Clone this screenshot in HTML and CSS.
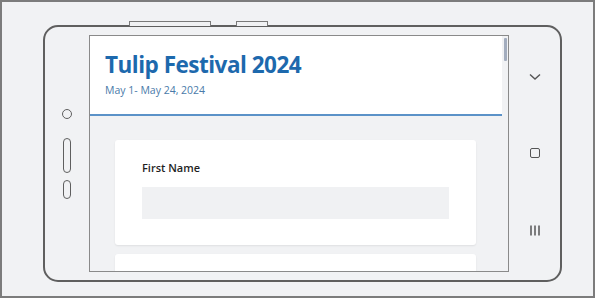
FILE: index.html
```html
<!DOCTYPE html>
<html lang="en">
<head>
    <meta charset="UTF-8">
    <meta name="viewport" content="width=device-width, initial-scale=1.0">
    <title>Tulip Festival 2024</title>
    <link rel="stylesheet" href="styles.css">
</head>
<body>

    <div class="frame">
        <div class="top-buttons">
            <div class="hw-button volume"></div>
            <div class="hw-button power"></div>
        </div>
        <div class="phone">
            <div class="side-left">
                <div class="camera"></div>
                <div class="pill long"></div>
                <div class="pill short"></div>
            </div>
            <div class="screen">
                <div class="content">
                    <div class="header">
                        <h1>Tulip Festival 2024</h1>
                        <p class="dates">May 1- May 24, 2024</p>
                    </div>
                    <div class="form">
                        <div class="card">
                            <label for="firstName">First Name</label>
                            <div class="field" id="firstName"></div>
                        </div>
                        <div class="card"></div>
                    </div>
                </div>
                <div class="scrollbar">
                    <div class="thumb"></div>
                </div>
            </div>
            <div class="side-right">
                <svg width="12" height="8" viewBox="0 0 12 8">
                    <path d="M1 1.5 L6 6 L11 1.5" fill="none" stroke="#555" stroke-width="1.4"/>
                </svg>
                <div class="square"></div>
                <svg width="12" height="11" viewBox="0 0 12 11">
                    <path d="M2 0.5 V10.5 M6 0.5 V10.5 M10 0.5 V10.5" fill="none" stroke="#555" stroke-width="1.5"/>
                </svg>
            </div>
        </div>
    </div>

</body>
</html>
```

FILE: styles.css
```css
body {
    margin: 0;
    background: #ffffff;
    font-family: "Open Sans", Arial, sans-serif;
}
.frame {
    box-sizing: border-box;
    width: 595px;
    height: 298px;
    border: 2px solid #7c7c7c;
    background: #f1f2f4;
    padding: 19px 0 0 41px;
}
.top-buttons {
    display: flex;
    margin-left: 86px;
    height: 4px;
}
.hw-button {
    box-sizing: border-box;
    height: 5px;
    border: 1px solid #7a7a7a;
    border-bottom: none;
    background: #f1f2f4;
}
.volume {
    width: 82px;
}
.power {
    width: 32px;
    margin-left: 25px;
}
.phone {
    box-sizing: border-box;
    width: 519px;
    height: 257px;
    border: 2px solid #5f5f5f;
    border-radius: 15px;
    display: flex;
    align-items: center;
}
.side-left {
    width: 44px;
    display: flex;
    flex-direction: column;
    align-items: center;
}
.camera {
    box-sizing: border-box;
    width: 10px;
    height: 10px;
    border: 1.5px solid #5f5f5f;
    border-radius: 50%;
}
.pill {
    box-sizing: border-box;
    width: 8px;
    border: 1.5px solid #5f5f5f;
    border-radius: 4px;
}
.long {
    height: 35px;
    margin-top: 19px;
}
.short {
    height: 19px;
    margin-top: 7px;
}
.screen {
    box-sizing: border-box;
    width: 420px;
    height: 237px;
    border: 1px solid #8a8a8a;
    display: flex;
    overflow: hidden;
}
.content {
    flex: 1;
    background: #f1f2f4;
}
.header {
    background: #ffffff;
    padding: 14px 15px 16px;
    border-bottom: 2px solid #5b92c8;
}
.header h1 {
    margin: 0;
    font-size: 22.5px;
    line-height: 29px;
    font-weight: 700;
    letter-spacing: -0.5px;
    color: #1d69ad;
}
.dates {
    margin: 4px 0 0;
    font-size: 10.5px;
    line-height: 15px;
    color: #4a7aa9;
}
.form {
    padding: 24px 26px 0 25px;
}
.card {
    background: #ffffff;
    border-radius: 3px;
    box-shadow: 0 1px 2px rgba(0,0,0,0.08);
    padding: 20px 27px 26px;
    margin-bottom: 9px;
}
.card label {
    display: block;
    font-size: 11px;
    line-height: 16px;
    font-weight: 600;
    color: #1f1f1f;
}
.field {
    height: 32px;
    margin-top: 11px;
    background: #f0f1f3;
}
.scrollbar {
    width: 6px;
    background: #f1f2f4;
}
.thumb {
    width: 3px;
    height: 23px;
    margin: 2px 0 0 2px;
    background: #a3adbe;
    border-radius: 1px;
}
.side-right {
    flex: 1;
    align-self: stretch;
    display: flex;
    flex-direction: column;
    align-items: center;
    justify-content: space-between;
    padding: 46px 0 44px;
}
.square {
    box-sizing: border-box;
    width: 10px;
    height: 10px;
    border: 1.5px solid #555;
    border-radius: 2px;
}
```
